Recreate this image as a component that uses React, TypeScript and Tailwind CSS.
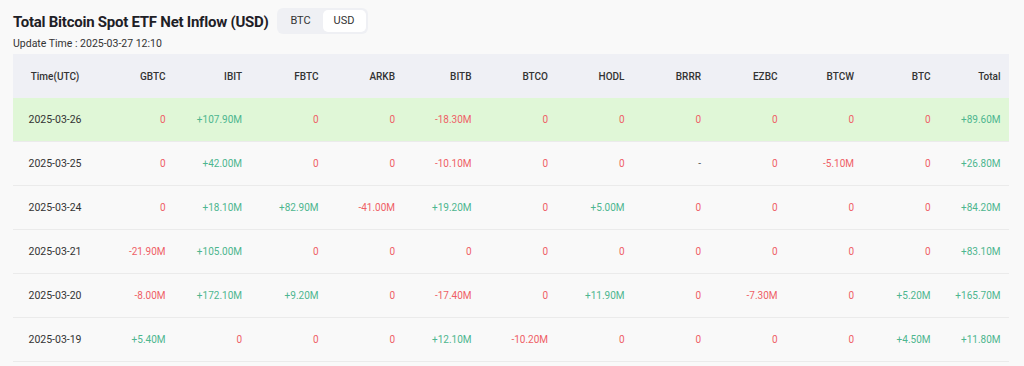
import React from "react";

const cols = ["GBTC", "IBIT", "FBTC", "ARKB", "BITB", "BTCO", "HODL", "BRRR", "EZBC", "BTCW", "BTC", "Total"];

const rows: { date: string; vals: string[]; hl?: boolean }[] = [
  { date: "2025-03-26", hl: true, vals: ["0", "+107.90M", "0", "0", "-18.30M", "0", "0", "0", "0", "0", "0", "+89.60M"] },
  { date: "2025-03-25", vals: ["0", "+42.00M", "0", "0", "-10.10M", "0", "0", "-", "0", "-5.10M", "0", "+26.80M"] },
  { date: "2025-03-24", vals: ["0", "+18.10M", "+82.90M", "-41.00M", "+19.20M", "0", "+5.00M", "0", "0", "0", "0", "+84.20M"] },
  { date: "2025-03-21", vals: ["-21.90M", "+105.00M", "0", "0", "0", "0", "0", "0", "0", "0", "0", "+83.10M"] },
  { date: "2025-03-20", vals: ["-8.00M", "+172.10M", "+9.20M", "0", "-17.40M", "0", "+11.90M", "0", "-7.30M", "0", "+5.20M", "+165.70M"] },
  { date: "2025-03-19", vals: ["+5.40M", "0", "0", "0", "+12.10M", "-10.20M", "0", "0", "0", "0", "+4.50M", "+11.80M"] },
];

function colorFor(v: string) {
  if (v === "-") return "text-[#555]";
  if (v.startsWith("+")) return "text-[#4db68f]";
  return "text-[#ef5f67]";
}

const grid = "grid grid-cols-[84px_repeat(11,76.5px)_70px]";

export default function App() {
  return (
    <div className="w-[1024px] h-[366px] bg-[#f9f9f9] overflow-hidden font-['Roboto',sans-serif]">
      <div className="pl-[13px] pt-[8px]">
        <div className="flex items-center h-[26px]">
          <h1 className="text-[15px] font-bold text-[#1e2026] tracking-[-0.25px] leading-none pt-[2px]">
            Total Bitcoin Spot ETF Net Inflow (USD)
          </h1>
          <div className="ml-[8px] flex items-center h-[26px] w-[91px] rounded-[6px] bg-[#eff0f4] p-[2px] text-[11px] text-[#333]">
            <div className="w-[45px] text-center">BTC</div>
            <div className="w-[44px] h-[22px] flex items-center justify-center rounded-[5px] bg-white">USD</div>
          </div>
        </div>
        <div className="mt-[3px] text-[10.5px] leading-[14px] text-[#333]">Update Time : 2025-03-27 12:10</div>
      </div>
      <div className="ml-[13px] mt-[3px] w-[995.5px]">
        <div className={`${grid} h-[44px] items-center bg-[#eff0f5] text-[10px] font-medium text-[#333]`}>
          <div className="text-center">Time(UTC)</div>
          {cols.map((c) => (
            <div key={c} className="text-right pr-[8px]">{c}</div>
          ))}
        </div>
        {rows.map((r) => (
          <div
            key={r.date}
            className={`${grid} h-[44px] items-center text-[10px] border-b border-[#ebebeb] ${r.hl ? "bg-[#e0f7d7]" : ""}`}
          >
            <div className="text-center text-[#333] text-[10.5px]">{r.date}</div>
            {r.vals.map((v, i) => (
              <div key={i} className={`text-right pr-[8px] ${colorFor(v)}`}>{v}</div>
            ))}
          </div>
        ))}
      </div>
    </div>
  );
}
